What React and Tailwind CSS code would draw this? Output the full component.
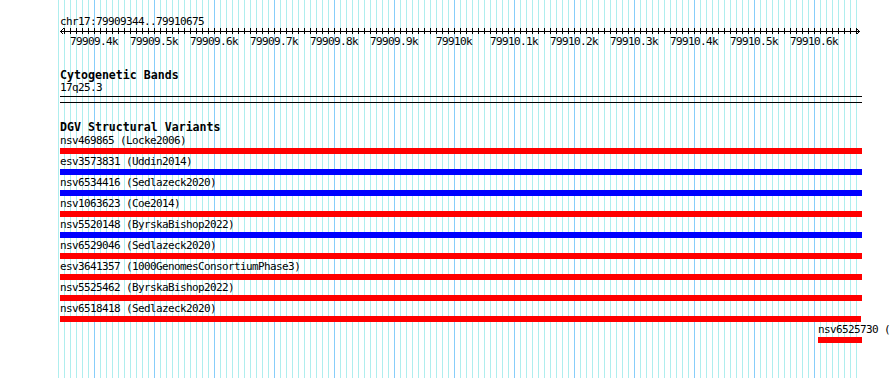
import React from "react";

const START = 79909344;
const END = 79910675;
// ruler scale: 0.6px per bp, 79909400 sits at x=94
const toX = (bp) => 94 + (bp - 79909400) * 0.6;

const majorLabels = [
  "79909.4k", "79909.5k", "79909.6k", "79909.7k", "79909.8k", "79909.9k", "79910k",
  "79910.1k", "79910.2k", "79910.3k", "79910.4k", "79910.5k", "79910.6k",
];

const variants = [
  { id: "nsv469865", study: "Locke2006", color: "red", end: 862 },
  { id: "esv3573831", study: "Uddin2014", color: "blue", end: 862 },
  { id: "nsv6534416", study: "Sedlazeck2020", color: "blue", end: 862 },
  { id: "nsv1063623", study: "Coe2014", color: "red", end: 862 },
  { id: "nsv5520148", study: "ByrskaBishop2022", color: "blue", end: 862 },
  { id: "nsv6529046", study: "Sedlazeck2020", color: "red", end: 862 },
  { id: "esv3641357", study: "1000GenomesConsortiumPhase3", color: "red", end: 862 },
  { id: "nsv5525462", study: "ByrskaBishop2022", color: "red", end: 862 },
  { id: "nsv6518418", study: "Sedlazeck2020", color: "red", end: 861 },
];

const Ruler = () => {
  const ticks = [];
  for (let bp = Math.ceil(START / 10) * 10; bp <= END; bp += 10) {
    const x = Math.round(toX(bp)) - 58 + 0.5;
    ticks.push(<line key={bp} x1={x} y1={1} x2={x} y2={7} stroke="black" strokeWidth="1" />);
  }
  return (
    <svg width="806" height="8" className="block" shapeRendering="crispEdges">
      <line x1="2" y1="4.5" x2="802" y2="4.5" stroke="black" strokeWidth="1" />
      {/* arrows */}
      <polyline points="5.5,1.5 2.5,4.5 5.5,7.5" fill="none" stroke="black" strokeWidth="1" />
      <polyline points="798.5,1.5 801.5,4.5 798.5,7.5" fill="none" stroke="black" strokeWidth="1" />
      {ticks}
    </svg>
  );
};

const VariantRow = ({ v }) => {
  const width = v.end - 60;
  return (
    <div className="mb-[1px]">
      <div className="h-[14px] leading-[14px] whitespace-nowrap">
        {v.id} ({v.study})
      </div>
      <div
        className={v.color === "red" ? "h-[6px] bg-[#ff0000]" : "h-[6px] bg-[#0000ff]"}
        style={{ width }}
      />
    </div>
  );
};

export default function App() {
  return (
    <div className="w-[890px] h-[378px] overflow-hidden bg-white text-black font-['DejaVu_Sans_Mono',monospace] text-[11px] tracking-[-0.62px]">
      <div className="ml-[58px] w-[799px] h-[378px] bg-[image:repeating-linear-gradient(90deg,transparent_0_36px,#87cefa_36px_37px,transparent_37px_60px),repeating-linear-gradient(90deg,#afeeee_0_1px,transparent_1px_6px)]">
        <div className="pt-[15px] pl-[2px]">
          <div className="h-[12px] leading-[13px] whitespace-nowrap">chr17:79909344..79910675</div>
        </div>

        <Ruler />

        <div className="flex pl-[6px] h-[13px] leading-[13px]">
          {majorLabels.map((l) => (
            <div key={l} className="w-[60px] shrink-0 text-center whitespace-nowrap">
              {l}
            </div>
          ))}
        </div>

        {/* Cytogenetic Bands */}
        <div className="pl-[2px] mt-[21px]">
          <div className="h-[12px] leading-[13px] font-bold text-[11.6px] tracking-normal whitespace-nowrap">
            Cytogenetic Bands
          </div>
          <div className="h-[13px] leading-[13px]">17q25.3</div>
          <div className="mt-[2px] h-[1px] w-[802px] bg-black" />
          <div className="mt-[5px] h-[1px] w-[802px] bg-black" />
        </div>

        {/* DGV Structural Variants */}
        <div className="pl-[2px] mt-[18px]">
          <div className="h-[13px] leading-[13px] font-bold text-[11.6px] tracking-normal whitespace-nowrap">
            DGV Structural Variants
          </div>
          {variants.map((v) => (
            <VariantRow key={v.id} v={v} />
          ))}
          <div className="ml-[758px]">
            <div className="h-[14px] leading-[14px] whitespace-nowrap">nsv6525730 (Sedlazeck2020)</div>
            <div className="h-[6px] w-[44px] bg-[#ff0000]" />
          </div>
        </div>
      </div>
    </div>
  );
}
